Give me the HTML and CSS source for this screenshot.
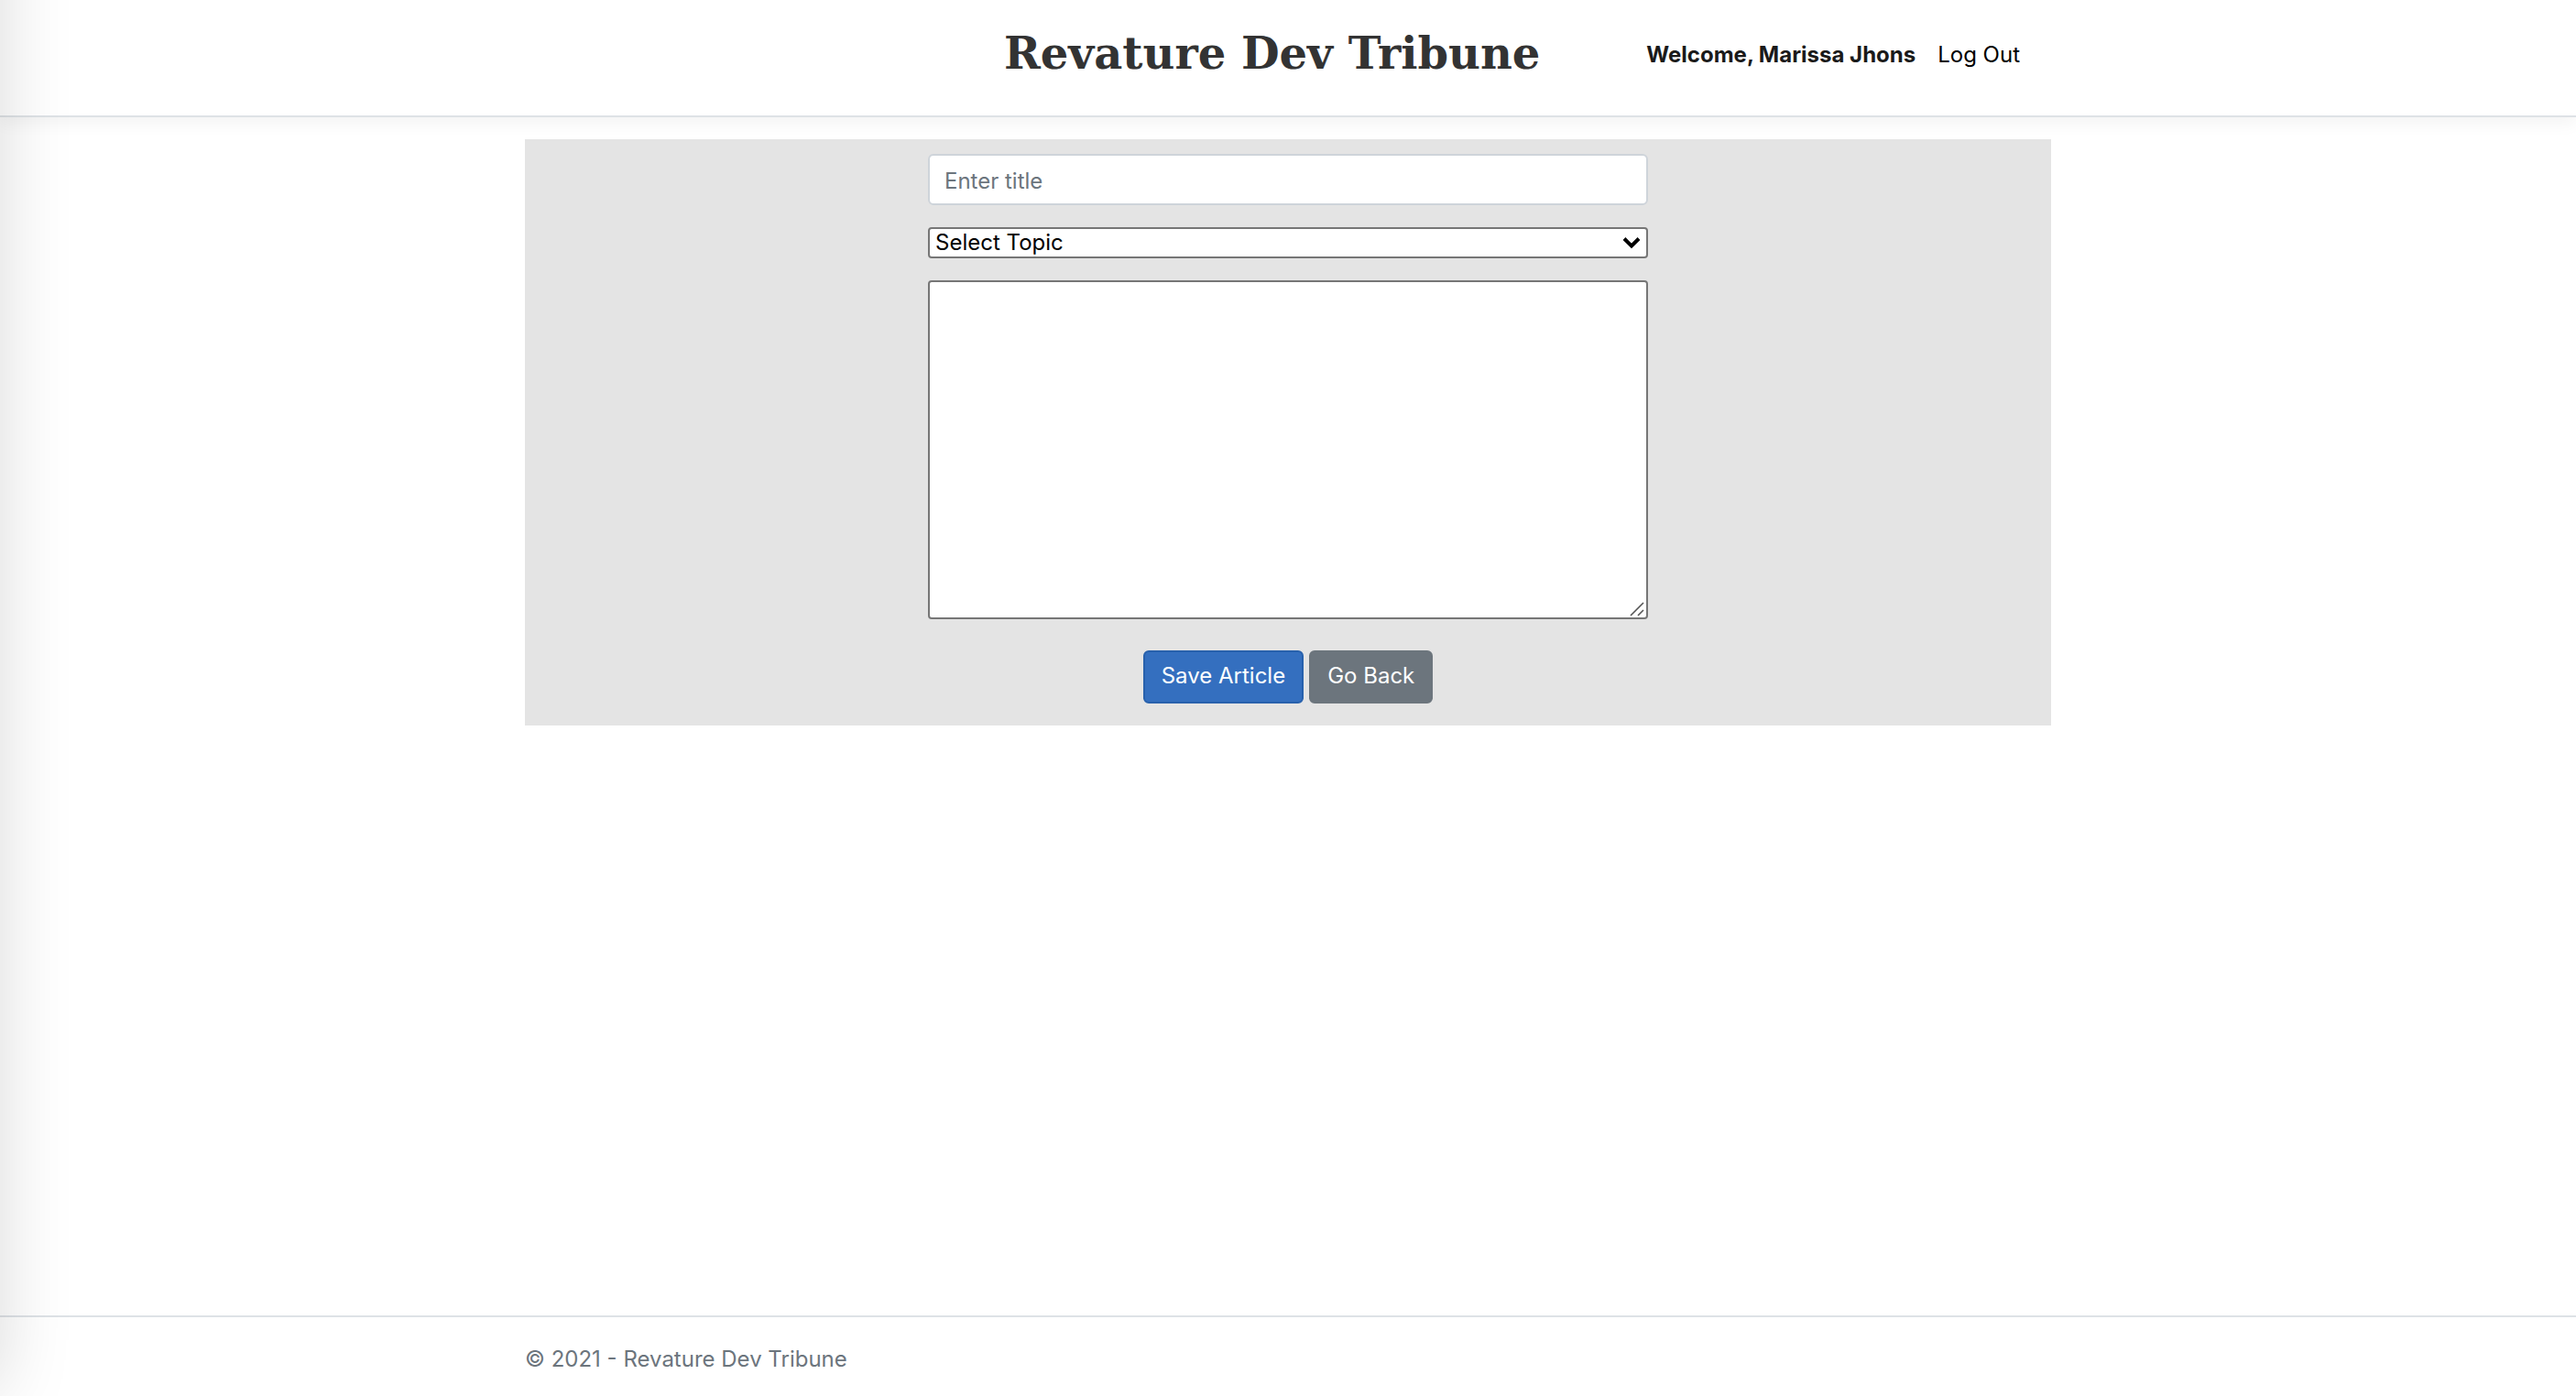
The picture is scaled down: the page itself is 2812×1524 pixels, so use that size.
FILE: index.html
```html
<!DOCTYPE html>
<html lang="en">
<head>
<meta charset="utf-8">
<title>Revature Dev Tribune</title>
<link rel="stylesheet" href="styles.css">
</head>
<body>
<header class="site-header">
  <nav class="container nav">
    <a class="brand" href="#">Revature Dev Tribune</a>
    <div class="account">
      <strong class="welcome">Welcome, Marissa Jhons</strong>
      <a class="logout" href="#">Log Out</a>
    </div>
  </nav>
</header>
<main class="container main">
  <form class="editor">
    <div class="fields">
      <input class="title-input" type="text" placeholder="Enter title" aria-label="Title">
      <div class="control">
        <select class="topic" aria-label="Topic"><option>Select Topic</option></select>
        <svg class="chevron" viewBox="0 0 20 14" aria-hidden="true"><path d="M2 2.5 10 10.5 18 2.5" fill="none" stroke="#000" stroke-width="4"/></svg>
      </div>
      <div class="control">
        <textarea class="content" aria-label="Article"></textarea>
        <svg class="grip" viewBox="0 0 16 16" aria-hidden="true"><path d="M1 15 15 1M9 15l6-6" fill="none" stroke="#555" stroke-width="1.6"/></svg>
      </div>
    </div>
    <div class="actions">
      <button class="btn btn-primary" type="button">Save Article</button>
      <button class="btn btn-secondary" type="button">Go Back</button>
    </div>
  </form>
</main>
<footer class="site-footer">
  <div class="container">© 2021 - Revature Dev Tribune</div>
</footer>
</body>
</html>
```
FILE: styles.css
```css
* { box-sizing: border-box; }

body {
  margin: 0;
  min-height: 100vh;
  display: flex;
  flex-direction: column;
  font: 24px/36px Inter, "Liberation Sans", sans-serif;
  color: #212529;
  background: #fff;
}

/* soft shade along the left edge of the window */
body::before {
  content: "";
  position: fixed;
  top: -200px;
  bottom: 8px;
  left: -200px;
  width: 200px;
  box-shadow: 0 0 80px rgba(0, 0, 0, 0.15);
  pointer-events: none;
  z-index: 1;
}

.container {
  width: 100%;
  max-width: 1666px;
  margin: 0 auto;
}

.site-header {
  border-bottom: 2px solid #dee2e6;
  box-shadow: 0 6px 18px rgba(0, 0, 0, 0.05);
}

.nav {
  display: flex;
  justify-content: flex-end;
  align-items: center;
  gap: 116px;
  height: 126px;
  padding: 0 34px 6px 0;
}

.brand {
  padding-bottom: 4px;
  font: bold 48px/60px "Old English Text MT", "DejaVu Serif", serif;
  color: #333;
  text-decoration: none;
  white-space: nowrap;
}

.account {
  display: flex;
  gap: 24px;
  white-space: nowrap;
}

.welcome { color: #1a1a1a; }

.logout {
  color: #000;
  text-decoration: none;
}

.main { margin-top: 24px; }

.editor {
  display: flex;
  flex-direction: column;
  align-items: center;
  gap: 34px;
  padding: 16px 24px 24px;
  background: #e4e4e4;
}

.fields {
  display: flex;
  flex-direction: column;
  gap: 24px;
  width: 100%;
  max-width: 786px;
}

.control {
  position: relative;
  display: flex;
}

.title-input,
.topic,
.content {
  width: 100%;
  margin: 0;
  font: inherit;
  background: #fff;
}

.title-input {
  height: 56px;
  padding: 6px 16px 4px;
  border: 2px solid #ced4da;
  border-radius: 6px;
}

.title-input::placeholder { color: #6c757d; }

.topic {
  appearance: none;
  height: 34px;
  padding: 0 6px;
  border: 2px solid #767676;
  border-radius: 4px;
  line-height: 30px;
  color: #000;
}

.chevron {
  position: absolute;
  right: 8px;
  top: 10px;
  width: 20px;
  height: 14px;
  pointer-events: none;
}

.content {
  height: 370px;
  padding: 4px;
  border: 2px solid #767676;
  border-radius: 4px;
  resize: none;
}

.grip {
  position: absolute;
  right: 4px;
  bottom: 3px;
  width: 16px;
  height: 16px;
  pointer-events: none;
}

.actions {
  display: flex;
  gap: 6px;
}

.btn {
  height: 58px;
  padding: 0 18px 2px;
  border: 2px solid;
  border-radius: 6px;
  font: inherit;
  color: #fff;
}

.btn-primary {
  background: #346fbf;
  border-color: #2861ac;
}

.btn-secondary {
  background: #6c757d;
  border-color: #6c757d;
}

.site-footer {
  margin-top: auto;
  padding: 28px 0 22px;
  border-top: 2px solid #dee2e6;
  color: #6c757d;
}
```
